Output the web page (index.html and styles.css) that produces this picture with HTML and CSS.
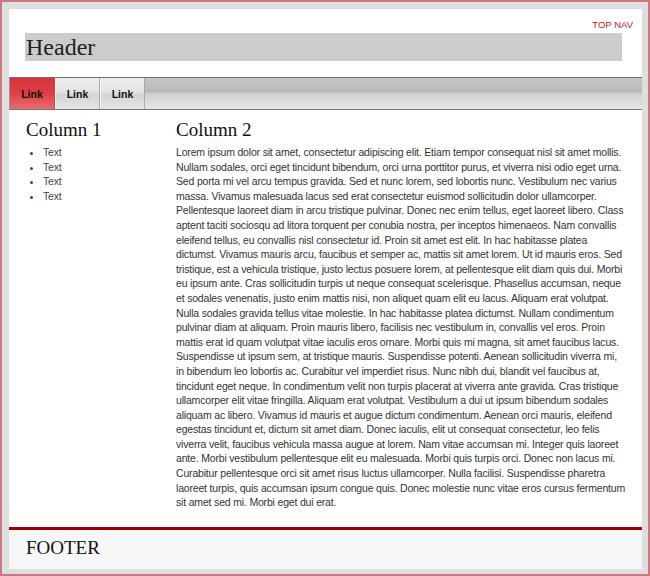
FILE: index.html
```html
<!DOCTYPE html>
<html>
<head>
<meta charset="utf-8">
<link rel="stylesheet" href="styles.css">
</head>
<body>
<div class="frame">
  <div class="page">
    <div class="topnav">TOP NAV</div>
    <div class="header"><h1 class="header-title">Header</h1></div>
    <nav class="nav">
      <a class="nav-item active">Link</a>
      <a class="nav-item">Link</a>
      <a class="nav-item">Link</a>
    </nav>
    <div class="content">
      <div class="col1">
        <h2 class="col-title">Column 1</h2>
        <ul class="list">
          <li>Text</li>
          <li>Text</li>
          <li>Text</li>
          <li>Text</li>
        </ul>
      </div>
      <div class="col2">
        <h2 class="col-title">Column 2</h2>
        <p class="body-text">Lorem ipsum dolor sit amet, consectetur adipiscing elit. Etiam tempor consequat nisl sit amet mollis. Nullam sodales, orci eget tincidunt bibendum, orci urna porttitor purus, et viverra nisi odio eget urna. Sed porta mi vel arcu tempus gravida. Sed et nunc lorem, sed lobortis nunc. Vestibulum nec varius massa. Vivamus malesuada lacus sed erat consectetur euismod sollicitudin dolor ullamcorper. Pellentesque laoreet diam in arcu tristique pulvinar. Donec nec enim tellus, eget laoreet libero. Class aptent taciti sociosqu ad litora torquent per conubia nostra, per inceptos himenaeos. Nam convallis eleifend tellus, eu convallis nisl consectetur id. Proin sit amet est elit. In hac habitasse platea dictumst. Vivamus mauris arcu, faucibus et semper ac, mattis sit amet lorem. Ut id mauris eros. Sed tristique, est a vehicula tristique, justo lectus posuere lorem, at pellentesque elit diam quis dui. Morbi eu ipsum ante. Cras sollicitudin turpis ut neque consequat scelerisque. Phasellus accumsan, neque et sodales venenatis, justo enim mattis nisi, non aliquet quam elit eu lacus. Aliquam erat volutpat. Nulla sodales gravida tellus vitae molestie. In hac habitasse platea dictumst. Nullam condimentum pulvinar diam at aliquam. Proin mauris libero, facilisis nec vestibulum in, convallis vel eros. Proin mattis erat id quam volutpat vitae iaculis eros ornare. Morbi quis mi magna, sit amet faucibus lacus. Suspendisse ut ipsum sem, at tristique mauris. Suspendisse potenti. Aenean sollicitudin viverra mi, in bibendum leo lobortis ac. Curabitur vel imperdiet risus. Nunc nibh dui, blandit vel faucibus at, tincidunt eget neque. In condimentum velit non turpis placerat at viverra ante gravida. Cras tristique ullamcorper elit vitae fringilla. Aliquam erat volutpat. Vestibulum a dui ut ipsum bibendum sodales aliquam ac libero. Vivamus id mauris et augue dictum condimentum. Aenean orci mauris, eleifend egestas tincidunt et, dictum sit amet diam. Donec iaculis, elit ut consequat consectetur, leo felis viverra velit, faucibus vehicula massa augue at lorem. Nam vitae accumsan mi. Integer quis laoreet ante. Morbi vestibulum pellentesque elit eu malesuada. Morbi quis turpis orci. Donec non lacus mi. Curabitur pellentesque orci sit amet risus luctus ullamcorper. Nulla facilisi. Suspendisse pharetra laoreet turpis, quis accumsan ipsum congue quis. Donec molestie nunc vitae eros cursus fermentum sit amet sed mi. Morbi eget dui erat.</p>
      </div>
    </div>
    <footer class="footer">FOOTER</footer>
  </div>
</div>
</body>
</html>
```
FILE: styles.css
```css
* { box-sizing: border-box; }
html, body { margin: 0; padding: 0; }
body { width: 650px; height: 576px; font-family: "Liberation Sans", Arial, sans-serif; }

.frame {
  width: 650px;
  height: 576px;
  border: 2px solid #c9797d;
  background: #dedede;
  padding: 7px 6px 5px 7px;
}

.page {
  background: #fff;
  height: 100%;
  display: flex;
  flex-direction: column;
}

.topnav {
  text-align: right;
  font-size: 9.5px;
  color: #b4202a;
  line-height: 13px;
  padding: 9px 9px 0 0;
}

.header {
  margin: 2px 20px 0 16px;
  background: #cccccc;
  height: 28px;
}
.header-title {
  margin: 0;
  font-family: "Liberation Serif", "Times New Roman", serif;
  font-weight: normal;
  font-size: 24px;
  line-height: 28px;
  color: #222;
  padding-left: 1px;
}

.nav {
  margin-top: 16px;
  height: 33px;
  border-top: 1px solid #6e6e6e;
  border-bottom: 1px solid #777;
  border-left: 1px solid #999;
  background: linear-gradient(to bottom, #c6c6c6 0%, #b8b8b8 45%, #cfcfcf 50%, #e6e6e6 100%);
  display: flex;
}
.nav-item {
  width: 45px;
  font-size: 10.5px;
  font-weight: bold;
  color: #111;
  display: flex;
  align-items: center;
  justify-content: center;
  border-right: 1px solid #aaa;
  border-left: 1px solid #f4f4f4;
  background: linear-gradient(to bottom, #efefef 0%, #e2e2e2 45%, #d4d4d4 55%, #e6e6e6 100%);
}
.nav-item.active {
  border-left: none;
  border-right: 1px solid #b44;
  background: linear-gradient(to bottom, #d6333a 0%, #dc4046 50%, #e96b70 100%);
}

.content {
  flex: 1;
  display: flex;
  padding: 10px 0 0 17px;
}
.col1 { width: 150px; }
.col2 { width: 451px; }
.col-title {
  margin: 0;
  font-family: "Liberation Serif", "Times New Roman", serif;
  font-weight: normal;
  font-size: 19px;
  line-height: 20px;
  color: #111;
}
.list {
  margin: 5px 0 0;
  padding-left: 17px;
  font-size: 10.5px;
  letter-spacing: -0.18px;
  line-height: 14.6px;
  color: #444;
}
.body-text {
  margin: 5px 0 0;
  font-size: 10.5px;
  letter-spacing: -0.18px;
  line-height: 14.6px;
  color: #333;
}

.footer {
  border-top: 3px solid #a10000;
  background: #f7f7f7;
  height: 42px;
  padding: 7px 0 0 17px;
  font-family: "Liberation Serif", "Times New Roman", serif;
  font-size: 19px;
  color: #111;
}
```
